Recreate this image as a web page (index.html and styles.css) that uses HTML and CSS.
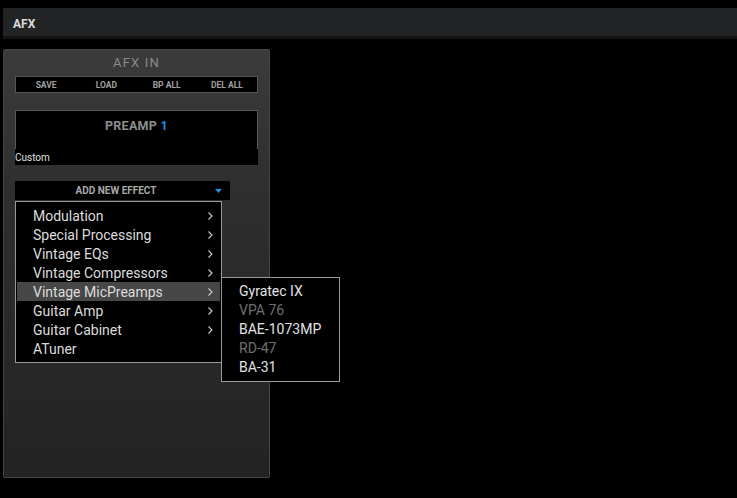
FILE: index.html
```html
<!DOCTYPE html>
<html>
<head>
<meta charset="utf-8">
<link rel="stylesheet" href="styles.css">
</head>
<body>
<div class="topbar"><span class="topbar-title">AFX</span></div>
<div class="panel">
  <div class="panel-title">AFX IN</div>
  <div class="btnbar">
    <span>SAVE</span><span>LOAD</span><span>BP ALL</span><span>DEL ALL</span>
  </div>
  <div class="preamp">
    <div class="preamp-name">PREAMP <span class="num">1</span></div>
  </div>
  <div class="custom">Custom</div>
  <div class="addwrap">
    <div class="addbtn">
      <span>ADD NEW EFFECT</span>
      <svg class="caret" width="7" height="4" viewBox="0 0 7 4"><polygon points="0,0 7,0 3.5,4" fill="#1e8fe0"/></svg>
    </div>
    <div class="menu">
      <div class="item"><span>Modulation</span><svg class="chev" width="5" height="8" viewBox="0 0 5 8"><polyline points="0.5,0.5 4,4 0.5,7.5" fill="none" stroke="#cfcfcf" stroke-width="1.1"/></svg></div>
      <div class="item"><span>Special Processing</span><svg class="chev" width="5" height="8" viewBox="0 0 5 8"><polyline points="0.5,0.5 4,4 0.5,7.5" fill="none" stroke="#cfcfcf" stroke-width="1.1"/></svg></div>
      <div class="item"><span>Vintage EQs</span><svg class="chev" width="5" height="8" viewBox="0 0 5 8"><polyline points="0.5,0.5 4,4 0.5,7.5" fill="none" stroke="#cfcfcf" stroke-width="1.1"/></svg></div>
      <div class="item"><span>Vintage Compressors</span><svg class="chev" width="5" height="8" viewBox="0 0 5 8"><polyline points="0.5,0.5 4,4 0.5,7.5" fill="none" stroke="#cfcfcf" stroke-width="1.1"/></svg></div>
      <div class="item active"><span>Vintage MicPreamps</span><svg class="chev" width="5" height="8" viewBox="0 0 5 8"><polyline points="0.5,0.5 4,4 0.5,7.5" fill="none" stroke="#cfcfcf" stroke-width="1.1"/></svg></div>
      <div class="item"><span>Guitar Amp</span><svg class="chev" width="5" height="8" viewBox="0 0 5 8"><polyline points="0.5,0.5 4,4 0.5,7.5" fill="none" stroke="#cfcfcf" stroke-width="1.1"/></svg></div>
      <div class="item"><span>Guitar Cabinet</span><svg class="chev" width="5" height="8" viewBox="0 0 5 8"><polyline points="0.5,0.5 4,4 0.5,7.5" fill="none" stroke="#cfcfcf" stroke-width="1.1"/></svg></div>
      <div class="item"><span>ATuner</span></div>
    </div>
    <div class="submenu">
      <div class="sitem">Gyratec IX</div>
      <div class="sitem dim">VPA 76</div>
      <div class="sitem">BAE-1073MP</div>
      <div class="sitem dim">RD-47</div>
      <div class="sitem">BA-31</div>
    </div>
  </div>
</div>
</body>
</html>
```
FILE: styles.css
```css
html, body {
  margin: 0;
  padding: 0;
  background: #000;
  width: 737px;
  height: 498px;
  overflow: hidden;
  font-family: "Roboto", "Liberation Sans", sans-serif;
}

.topbar {
  margin: 8px 0 0 3px;
  height: 28px;
  background: #222324;
  border-bottom: 3px solid #141414;
  display: flex;
  align-items: center;
  padding-left: 10px;
}

.topbar-title {
  color: #dcdcdc;
  font-weight: bold;
  font-size: 12px;
  padding-top: 3px;
}

.panel {
  margin: 10px 0 0 3px;
  height: 427px;
  border: 1px solid #464646;
  border-radius: 2px;
  background: linear-gradient(to bottom, #3b3b3b 0%, #2e2e2e 35%, #232323 100%);
  padding: 0 11px;
  box-sizing: content-box;
  width: 243px;
  position: relative;
}

.panel-title {
  height: 26px;
  display: flex;
  align-items: center;
  justify-content: center;
  color: #8a8a8a;
  font-size: 13px;
  letter-spacing: 1.2px;
  padding-bottom: 2px;
  box-sizing: border-box;
}

.btnbar {
  height: 15px;
  background: #000;
  border: 1px solid #555;
  display: grid;
  grid-template-columns: repeat(4, 1fr);
  align-items: center;
  box-sizing: content-box;
  width: 241px;
}

.btnbar span {
  text-align: center;
  color: #a0a0a0;
  font-size: 8.5px;
  font-weight: bold;
}

.preamp {
  margin-top: 17px;
  height: 38px;
  background: #000;
  border: 1px solid #585858;
  border-bottom: none;
  width: 241px;
  display: flex;
  justify-content: center;
}

.preamp-name {
  margin-top: 7px;
  color: #8e8e8e;
  font-weight: bold;
  font-size: 12.5px;
  letter-spacing: 0.3px;
}

.preamp-name .num {
  color: #1e8fe0;
}

.custom {
  height: 16px;
  background: #000;
  width: 243px;
  color: #e0e0e0;
  font-size: 10px;
  line-height: 17px;
}

.addwrap {
  margin-top: 16px;
  position: relative;
}

.addbtn {
  width: 215px;
  height: 19px;
  background: #000;
  position: relative;
  display: flex;
  align-items: center;
  justify-content: center;
  color: #a8a8a8;
  font-size: 10px;
  font-weight: bold;
}

.addbtn span {
  margin-left: -13px;
}

.caret {
  position: absolute;
  right: 8px;
  top: 8px;
}

.menu {
  position: absolute;
  left: 0;
  top: 20px;
  width: 205px;
  padding: 4px 0;
  background: #000;
  border: 1px solid #9a9a9a;
  z-index: 2;
}

.item {
  height: 19px;
  display: flex;
  align-items: center;
  justify-content: space-between;
  padding: 0 7px 0 16px;
  color: #dcdcdc;
  font-size: 14px;
  margin: 0 1px;
}

.item.active {
  background: #474747;
}

.submenu {
  position: absolute;
  left: 206px;
  top: 96px;
  width: 117px;
  padding: 4px 0;
  background: #000;
  border: 1px solid #9a9a9a;
  z-index: 3;
}

.sitem {
  height: 19px;
  line-height: 19px;
  padding-left: 17px;
  color: #e2e2e2;
  font-size: 14px;
}

.sitem.dim {
  color: #6f6f6f;
}
```
